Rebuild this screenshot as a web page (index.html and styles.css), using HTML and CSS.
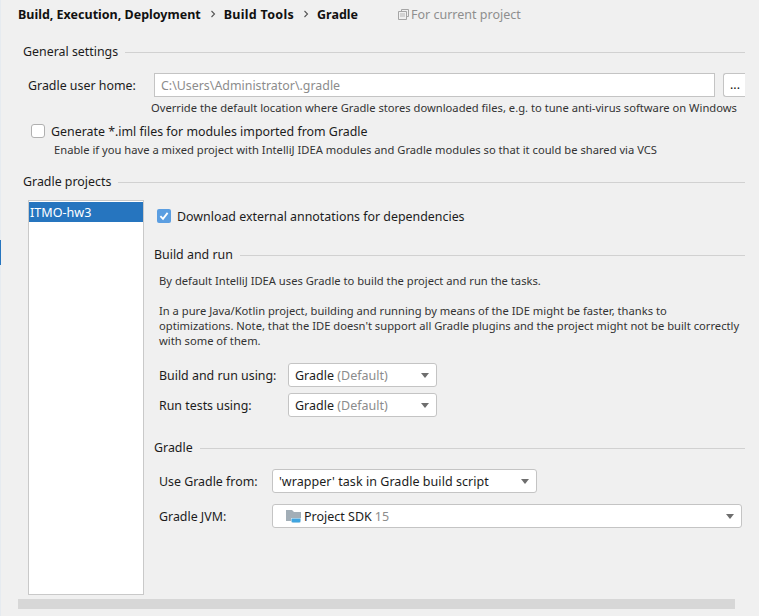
FILE: index.html
```html
<!DOCTYPE html>
<html lang="en">
<head>
<meta charset="utf-8">
<title>Gradle settings</title>
<link rel="stylesheet" href="styles.css">
</head>
<body>
<div class="app">
  <div class="rail"><div class="rail-mark"></div></div>
  <main class="main">
    <header class="crumbs">
      <span class="crumb">Build, Execution, Deployment</span>
      <svg class="chev" width="6" height="8" viewBox="0 0 6 8"><path d="M1.5 1l3 3-3 3" fill="none" stroke="#555" stroke-width="1.1"/></svg>
      <span class="crumb crumb-mid">Build Tools</span>
      <svg class="chev" width="6" height="8" viewBox="0 0 6 8"><path d="M1.5 1l3 3-3 3" fill="none" stroke="#555" stroke-width="1.1"/></svg>
      <span class="crumb">Gradle</span>
      <span class="scope">
        <svg width="11" height="11" viewBox="0 0 11 11"><path d="M3.5 2.500v-2h7v7h-2" fill="none" stroke="#a5a5a5"/><path d="M.5 2.500h8v8h-8z" fill="none" stroke="#a5a5a5"/><path d="M2 5h5M2 7h5" stroke="#b5b5b5"/></svg>
        For current project
      </span>
    </header>

    <div class="sep sep-general"><span>General settings</span><i></i></div>
    <div class="home-row">
      <label class="home-label">Gradle user home:</label>
      <div class="field">C:\Users\Administrator\.gradle</div>
      <button class="more">...</button>
    </div>
    <p class="help help-home">Override the default location where Gradle stores downloaded files, e.g. to tune anti-virus software on Windows</p>
    <div class="check-row check-iml"><span class="box"></span><span>Generate *.iml files for modules imported from Gradle</span></div>
    <p class="help help-iml">Enable if you have a mixed project with IntelliJ IDEA modules and Gradle modules so that it could be shared via VCS</p>

    <div class="sep sep-projects"><span>Gradle projects</span><i></i></div>
    <div class="projects">
      <div class="list"><div class="list-item">ITMO-hw3</div></div>
      <div class="detail">
        <div class="check-row check-ann">
          <span class="box box-on"><svg width="14" height="14" viewBox="0 0 14 14"><path d="M3.400 7.200l2.600 2.700 4.600-6" fill="none" stroke="#fff" stroke-width="1.800"/></svg></span>
          <span>Download external annotations for dependencies</span>
        </div>
        <div class="sep sep-build"><span>Build and run</span><i></i></div>
        <div class="para">
          <p>By default IntelliJ IDEA uses Gradle to build the project and run the tasks.</p>
          <p>In a pure Java/Kotlin project, building and running by means of the IDE might be faster, thanks to<br>optimizations. Note, that the IDE doesn't support all Gradle plugins and the project might not be built correctly<br>with some of them.</p>
        </div>
        <div class="form form-build">
          <label>Build and run using:</label>
          <div class="combo combo-s"><span>Gradle <em>(Default)</em></span><b class="arrow"></b></div>
          <label>Run tests using:</label>
          <div class="combo combo-s"><span>Gradle <em>(Default)</em></span><b class="arrow"></b></div>
        </div>
        <div class="sep sep-gradle"><span>Gradle</span><i></i></div>
        <div class="form form-gradle">
          <label>Use Gradle from:</label>
          <div class="combo combo-m"><span class="wrapper">'wrapper' task in Gradle build script</span><b class="arrow"></b></div>
          <label>Gradle JVM:</label>
          <div class="combo combo-l">
            <span class="sdk">
              <svg width="16" height="15" viewBox="0 0 16 15"><path d="M0 1h6l2 2h7v9H0z" fill="#a2aeb7"/><path d="M5 9h10v3.500a1.500 1.500 0 0 1-1.500 1.500h-7A1.500 1.500 0 0 1 5 12.500z" fill="#f0f0f0"/><path d="M5.500 9.500h9v2.500a1.500 1.500 0 0 1-1.500 1.500h-6a1.500 1.500 0 0 1-1.500-1.500z" fill="#40a5e0"/></svg>
              Project SDK <em>15</em>
            </span>
            <b class="arrow"></b>
          </div>
        </div>
      </div>
    </div>
    <div class="hscroll"></div>
  </main>
</div>
</body>
</html>
```

FILE: styles.css
```css
* { box-sizing: border-box; }
html, body { margin: 0; padding: 0; }
body {
  width: 759px;
  height: 616px;
  overflow: hidden;
  background: #f0f0f0;
  color: #1c1c1c;
  font-family: "Noto Sans", "Open Sans", sans-serif;
  font-size: 12.4px;
}
p { margin: 0; }
.app { display: flex; height: 616px; }
.rail { width: 1px; flex: none; background: #e6ebf0; }
.rail-mark { width: 1px; height: 25px; margin-top: 240px; background: #2675bf; }
.main { width: 758px; flex: none; }

.crumbs { display: flex; align-items: center; height: 28px; padding-left: 17px; font-size: 12.5px; }
.crumb { font-weight: 700; color: #111; }
.crumb-mid { letter-spacing: .3px; }
.chev { margin: 0 8px 0 9px; }
.scope { display: flex; align-items: center; gap: 2px; margin-left: 40px; color: #8e8e8e; }

.sep { display: flex; align-items: center; height: 18px; gap: 7px; }
.sep span { margin-bottom: 2px; }
.sep i { flex: 1; height: 1px; background: #d1d1d1; }
.sep-general { margin: 15px 14px 0 22px; }
.sep-projects { margin: 15px 14px 0 22px; }
.sep-build { margin: 22px 14px 0 10px; }
.sep-gradle { margin: 22px 14px 0 10px; }

.home-row { display: flex; align-items: center; height: 24px; margin: 12px 0 0 27px; }
.home-label { width: 126px; flex: none; }
.field {
  width: 561px; height: 24px; padding-left: 6px; line-height: 23px;
  background: #fff; border: 1px solid #c4c4c4; color: #8c8c8c;
}
.more {
  width: 22px; height: 24px; margin-left: 8px; padding: 0 0 0 1px;
  background: #fff; border: 1px solid #c4c4c4; border-right: 0; border-radius: 3px 0 0 3px;
  font: inherit; color: #111; line-height: 20px;
}

.help { height: 16px; line-height: 16px; font-size: 11.2px; color: #333; white-space: nowrap; }
.help-home { margin: 3px 0 0 150px; }
.help-iml { margin: 3px 0 0 53px; }

.check-row { display: flex; align-items: center; height: 16px; }
.check-iml { margin: 7px 0 0 30px; gap: 6px; }
.check-ann { margin-left: 13px; gap: 6px; }
.box { width: 14px; height: 14px; flex: none; background: #fff; border: 1px solid #b0b0b0; border-radius: 3px; }
.box-on { background: #5b9ee1; border: 0; border-radius: 2px; display: block; }
.box-on svg { display: block; }

.projects { display: flex; margin: 9px 0 0 27px; }
.list { width: 116px; height: 395px; flex: none; padding: 1px 0 0; background: #fff; border: 1px solid #c9c9c9; }
.list-item { height: 20px; padding: 1px 0 0 1px; line-height: 20px; background: #2675bf; color: #fff; font-size: 12.6px; }
.detail { flex: 1; padding-top: 8px; min-width: 0; }

.para { margin: 9px 0 0 15px; font-size: 11.2px; line-height: 15px; color: #333; white-space: nowrap; }
.para p + p { margin-top: 15px; }

.form { display: grid; align-items: center; margin-left: 15px; }
.form-build { grid-template-columns: 129px auto; grid-auto-rows: 24px; row-gap: 6px; margin-top: 15px; justify-content: start; }
.form-gradle { grid-template-columns: 113px auto; grid-auto-rows: 24px; row-gap: 11px; margin-top: 12px; justify-content: start; }

.combo {
  display: flex; align-items: center; justify-content: space-between;
  height: 24px; padding: 0 7px 0 6px; font-size: 12.5px;
  background: #fff; border: 1px solid #c4c4c4; border-radius: 3px; white-space: nowrap;
}
.combo em { font-style: normal; color: #8c8c8c; }
.wrapper { letter-spacing: .05px; }
.combo-s { width: 149px; }
.combo-m { width: 265px; }
.combo-l { width: 470px; padding-left: 13px; }
.sdk { display: flex; align-items: center; gap: 2px; }
.sdk em { margin-left: 1px; }
.arrow { width: 0; height: 0; border-left: 4.500px solid transparent; border-right: 4.500px solid transparent; border-top: 5px solid #6e6e6e; }

.hscroll { width: 717px; height: 10px; margin: 4px 0 0 17px; background: #d7d7d7; }
```
